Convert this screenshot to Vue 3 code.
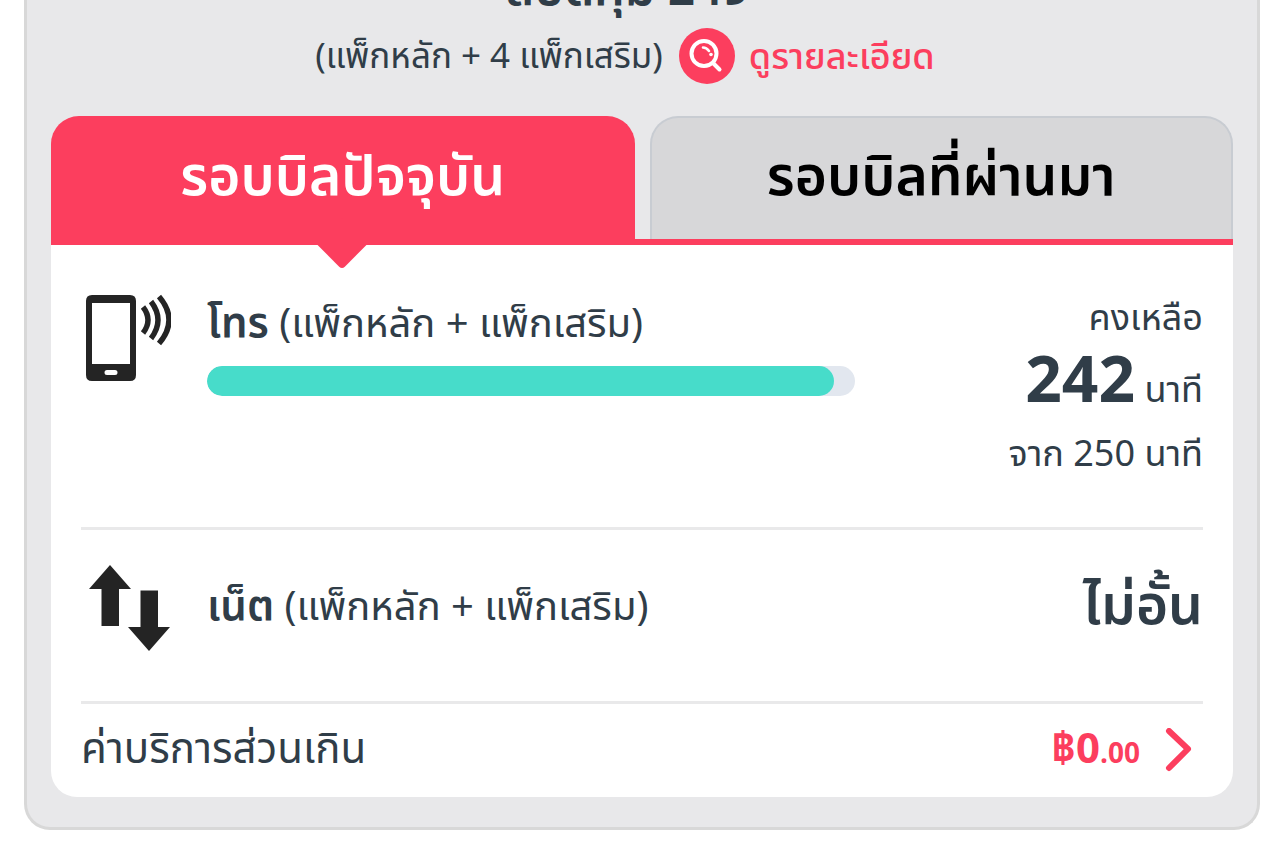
<script setup>
import { ref, computed } from 'vue'

const tabs = [
  { key: 'current', label: 'รอบบิลปัจจุบัน' },
  { key: 'previous', label: 'รอบบิลที่ผ่านมา' }
]
const activeTab = ref('current')

const voice = { remaining: 242, total: 250 }
const voicePercent = computed(() => (voice.remaining / voice.total) * 100)
</script>

<template>
  <main class="package-card">
    <header class="package-header">
      <h1 class="package-name">สปีดคุ้ม 249</h1>
      <div class="package-sub">
        <span>(แพ็กหลัก + 4 แพ็กเสริม)</span>
        <a href="#" class="detail-link">
          <svg class="detail-icon" viewBox="0 0 56 56" aria-hidden="true">
            <circle cx="28" cy="28" r="28" fill="#fc3e5e" />
            <circle cx="25" cy="25.500" r="12.500" fill="none" stroke="#fff" stroke-width="4" />
            <path d="M34.500 35.500L40.500 41.500" fill="none" stroke="#fff" stroke-width="4" stroke-linecap="round" />
            <path d="M24 19.500Q27.500 19.500 30 23" fill="none" stroke="#fff" stroke-width="2.600" stroke-linecap="round" />
            <circle cx="32" cy="26.500" r="1.800" fill="#fff" />
          </svg>
          <span>ดูรายละเอียด</span>
        </a>
      </div>
    </header>

    <div class="tabs" role="tablist">
      <button
        v-for="tab in tabs"
        :key="tab.key"
        type="button"
        role="tab"
        class="tab"
        :class="{ active: activeTab === tab.key }"
        :aria-selected="activeTab === tab.key"
        @click="activeTab = tab.key"
      >
        {{ tab.label }}
      </button>
    </div>

    <div class="panel">
      <section class="usage-row voice-row">
        <svg class="usage-icon" viewBox="0 0 90 90" aria-hidden="true">
          <path
            fill="#242424"
            fill-rule="evenodd"
            d="M11 2h38q6 0 6 6v74q0 6-6 6H11q-6 0-6-6V8q0-6 6-6zM11 10v61h38V10zM26 77q-2.500 0-2.500 2.500T26 82h8q2.500 0 2.500-2.500T34 77z"
          />
          <path
            fill="none"
            stroke="#242424"
            stroke-width="5.400"
            d="M62 14Q72 27 62 40M70 8.500Q84 27 70 45.500M78 3.500Q98 27 78 50.500"
          />
        </svg>
        <div class="usage-main">
          <h2 class="usage-title"><b>โทร</b> (แพ็กหลัก + แพ็กเสริม)</h2>
          <div class="bar">
            <div class="bar-fill" :style="{ width: voicePercent + '%' }"></div>
          </div>
        </div>
        <div class="usage-side">
          <div class="side-text">คงเหลือ</div>
          <div class="side-amount"><strong>{{ voice.remaining }}</strong> นาที</div>
          <div class="side-text">จาก {{ voice.total }} นาที</div>
        </div>
      </section>

      <section class="usage-row net-row">
        <svg class="usage-icon" viewBox="0 0 90 90" aria-hidden="true">
          <path fill="#242424" d="M29 2L50 26H38V63H20.500V26H8zM59.500 27.500H77V64H89L68 88L47 64H59.500z" />
        </svg>
        <h2 class="usage-title"><b>เน็ต</b> (แพ็กหลัก + แพ็กเสริม)</h2>
        <strong class="unlimited">ไม่อั้น</strong>
      </section>

      <a href="#" class="extra-row">
        <span class="extra-label">ค่าบริการส่วนเกิน</span>
        <span class="extra-price">฿0<small>.00</small></span>
        <svg class="chevron" viewBox="0 0 28 44" aria-hidden="true">
          <path d="M4 3L23 21L4 40" fill="none" stroke="#fc3e5e" stroke-width="6" stroke-linecap="round" stroke-linejoin="round" />
        </svg>
      </a>
    </div>
  </main>
</template>

<style>
body { margin: 0; background: #fff; }
</style>

<style scoped>
* { box-sizing: border-box; }
.package-card {
  margin: 0 24px; padding: 0 24px 30px; background: #e8e8ea; color: #303d48;
  border: 3px solid #d8d8d8; border-top: none; border-radius: 0 0 26px 26px;
  font-family: "Noto Sans Thai", "Noto Sans", sans-serif;
}
a { color: inherit; text-decoration: none; }
h1, h2 { margin: 0; }

.package-header { padding-bottom: 32px; }
.package-name {
  height: 21px; overflow: hidden; display: flex; align-items: flex-end; justify-content: center;
  padding-right: 28px; font-size: 48px; line-height: 60px; font-weight: 600;
}
.package-sub {
  display: flex; justify-content: center; align-items: center; gap: 16px; height: 63px; padding-top: 7px;
  padding-right: 34px; font-size: 35px; font-weight: 400; line-height: 56px; white-space: nowrap;
}
.package-sub span { padding-top: 3px; }
.detail-link { display: flex; align-items: center; gap: 14px; color: #fc3e5e; font-size: 36px; font-weight: 500; }
.detail-icon { width: 56px; height: 56px; }

.tabs { display: grid; grid-template-columns: 1fr 1fr; column-gap: 15px; border-bottom: 6px solid #fc3e5e; }
.tab {
  position: relative; height: 123px; padding: 0; cursor: pointer;
  background: #d7d7d9; color: #000; border: 2px solid #c8ccd2; border-bottom: none;
  border-radius: 28px 28px 0 0; font-family: inherit; font-size: 55px; font-weight: 600;
}
.tab.active { background: #fc3e5e; border-color: #fc3e5e; color: #fff; }
.tab.active::after {
  content: ''; position: absolute; left: 50%; bottom: -23px; width: 36px; height: 36px; margin-left: -19px;
  background: #fc3e5e; border-radius: 0 0 4px 0; transform: rotate(45deg);
}

.panel { padding: 0 30px; background: #fff; border-radius: 0 0 26px 26px; }
.usage-row { display: flex; border-bottom: 3px solid #e9e9ea; }
.usage-icon { flex: none; width: 90px; height: 90px; margin-right: 36px; }
.usage-title { font-size: 40px; line-height: 62px; font-weight: 400; white-space: nowrap; }
.usage-title b { font-size: 42px; font-weight: 600; }

.voice-row { height: 285px; padding-top: 48px; }
.usage-main { flex: 1; }
.bar { height: 30px; margin-top: 10px; background: #e2e7ef; border-radius: 15px; overflow: hidden; }
.bar-fill { height: 100%; background: #47dcca; border-radius: 15px; }
.usage-side { width: 31%; text-align: right; font-size: 36px; font-weight: 400; white-space: nowrap; }
.side-text { line-height: 52px; }
.side-amount { line-height: 76px; }
.side-amount strong { font-size: 64px; font-weight: 700; }

.net-row { height: 174px; padding-bottom: 16px; align-items: center; }
.unlimited { margin-left: auto; font-size: 55px; line-height: 80px; font-weight: 600; }

.extra-row { display: flex; align-items: center; height: 93px; padding: 0 10px 2px 0; }
.extra-label { font-size: 42px; font-weight: 400; }
.extra-price { margin-left: auto; color: #fc3e5e; font-size: 42px; font-weight: 700; }
.extra-price small { font-size: 28px; }
.chevron { width: 28px; height: 44px; margin-left: 25px; }
</style>
